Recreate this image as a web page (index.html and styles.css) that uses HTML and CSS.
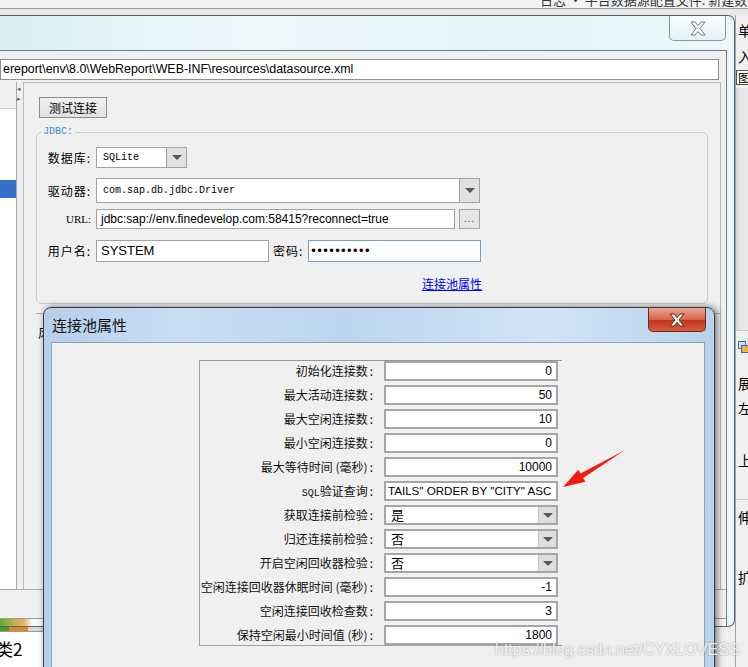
FILE: index.html
```html
<!DOCTYPE html>
<html lang="zh">
<head>
    <meta charset="UTF-8">
    <meta name="viewport" content="width=device-width, initial-scale=1.0">
    <title>连接池属性</title>
    <link rel="stylesheet" href="styles.css">
</head>
<body>
<div class="desk">
    <div class="caption">日志 · 平台数据源配置文件: 新建数据连接 1</div>
    <div class="toolstrip"></div>

    <!-- app behind, right edge -->
    <div class="side">
        <div class="s-ch s1">单</div>
        <div class="s-ch s2">入</div>
        <div class="s-box">图区</div>
        <div class="s-shade"></div>
        <div class="s-icon"><span class="sq1"></span><span class="sq2"></span></div>
        <div class="s-ch s4">展</div>
        <div class="s-ch s5">左</div>
        <div class="s-ch s6">上</div>
        <div class="s-line"></div>
        <div class="s-ch s7">伸</div>
        <div class="s-ch s8">扩</div>
    </div>

    <!-- app behind, bottom left -->
    <div class="bottom-app">
        <div class="strip"><span class="g"></span><span class="o"></span></div>
        <div class="tabs">类2</div>
    </div>

    <!-- data connection window -->
    <div class="win main">
        <div class="title">
            <div class="close">
                <svg width="18" height="15" viewBox="0 0 18 15"><polygon points="2,1 6,1 9,4.5 12,1 16,1 11,7.5 16,14 12,14 9,10.5 6,14 2,14 7,7.5" fill="#fbfbfb" stroke="#6f7a84" stroke-width="1"/></svg>
            </div>
        </div>
        <div class="body">
            <div class="path">ereport\env\8.0\WebReport\WEB-INF\resources\datasource.xml</div>
            <div class="split">
                <div class="tree">
                    <div class="tree-head"></div>
                    <div class="tree-list"><div class="sel"></div></div>
                </div>
                <div class="divider"><span>&#9666;</span><span>&#9656;</span></div>
                <div class="editor">
                    <div class="btn">测试连接</div>
                    <fieldset class="jdbc">
                        <legend>JDBC:</legend>
                        <div class="frow r1">
                            <label>数据库:</label>
                            <div class="combo w-db"><span>SQLite</span><i></i></div>
                        </div>
                        <div class="frow r2">
                            <label>驱动器:</label>
                            <div class="combo w-drv"><span>com.sap.db.jdbc.Driver</span><i></i></div>
                        </div>
                        <div class="frow r3">
                            <label class="url">URL:</label>
                            <div class="tf w-url">jdbc:sap://env.finedevelop.com:58415?reconnect=true</div>
                            <div class="dots">...</div>
                        </div>
                        <div class="frow r4">
                            <label>用户名:</label>
                            <div class="tf w-user">SYSTEM</div>
                            <span class="pw-label">密码:</span>
                            <div class="tf pw">&#8226;&#8226;&#8226;&#8226;&#8226;&#8226;&#8226;&#8226;&#8226;&#8226;</div>
                        </div>
                        <div class="pool"><a href="#">连接池属性</a></div>
                    </fieldset>
                    <div class="group2"><span>风</span></div>
                </div>
            </div>
            <div class="foot"><div class="bar"></div></div>
        </div>
    </div>

    <!-- pool properties dialog -->
    <div class="win dialog">
        <div class="dtitle">
            <span class="dname">连接池属性</span>
            <div class="dclose">
                <svg width="18" height="14" viewBox="0 0 18 14"><polygon points="2,1 6,1 9,4.5 12,1 16,1 11,7 16,13 12,13 9,9.5 6,13 2,13 7,7" fill="#ffffff" stroke="#5b1e16" stroke-width="1"/></svg>
            </div>
        </div>
        <div class="dbody">
            <div class="props">
                <div class="pl">初始化连接数<b>:</b></div><div class="pf">0</div>
                <div class="pl">最大活动连接数<b>:</b></div><div class="pf">50</div>
                <div class="pl">最大空闲连接数<b>:</b></div><div class="pf">10</div>
                <div class="pl">最小空闲连接数<b>:</b></div><div class="pf">0</div>
                <div class="pl">最大等待时间 (毫秒)<b>:</b></div><div class="pf">10000</div>
                <div class="pl"><span class="sql">SQL</span>验证查询<b>:</b></div><div class="pf left">TAILS" ORDER BY "CITY" ASC</div>
                <div class="pl">获取连接前检验<b>:</b></div><div class="pc"><span>是</span><i></i></div>
                <div class="pl">归还连接前检验<b>:</b></div><div class="pc"><span>否</span><i></i></div>
                <div class="pl">开启空闲回收器检验<b>:</b></div><div class="pc"><span>否</span><i></i></div>
                <div class="pl">空闲连接回收器休眠时间 (毫秒)<b>:</b></div><div class="pf">-1</div>
                <div class="pl">空闲连接回收检查数<b>:</b></div><div class="pf">3</div>
                <div class="pl">保持空闲最小时间值 (秒)<b>:</b></div><div class="pf">1800</div>
            </div>
        </div>
    </div>

    <svg class="arrow" width="80" height="55" viewBox="0 0 80 55">
        <polygon points="70,10 28.2,37.9 30.5,41.7 8,47 23.3,29.7 25.6,33.5" fill="#f21b14"/>
    </svg>

    <div class="watermark">https://blog.csdn.net/CYXLOVESS</div>
</div>
</body>
</html>
```

FILE: styles.css
```css
*{
    box-sizing: border-box;
}

body{
    margin: 0;
    background-color: #f0f0f0;
    font-family: "Noto Sans CJK SC", "Liberation Sans", sans-serif;
    font-size: 12px;
    color: #000;
}

.desk{
    position: relative;
    width: 748px;
    height: 667px;
    overflow: hidden;
    background-color: #f0f0f0;
}

.caption{
    height: 9px;
    overflow: hidden;
    border-bottom: 1px solid #9a9a9a;
    background-color: #f4f4f4;
    padding-left: 540px;
    font-size: 13px;
    line-height: 0;
    color: #333;
    white-space: nowrap;
}

.toolstrip{
    height: 8px;
    background-color: #e9e9e9;
}

/* right strip of the app behind */
.side{
    position: absolute;
    left: 735px;
    top: 15px;
    width: 13px;
    height: 652px;
    background-color: #f0f0f0;
    border-left: 1px solid #9ea6ae;
    font-size: 14px;
    line-height: 16px;
    white-space: nowrap;
}

.s-ch{
    padding-left: 2px;
}

.s1{ margin-top: 7px; }
.s2{ margin-top: 10px; }

.s-box{
    margin-top: 6px;
    height: 15px;
    line-height: 14px;
    font-size: 12px;
    background-color: #fff;
    border: 1px solid #555;
    border-right: none;
    padding-left: 1px;
}

.s-shade{
    height: 243px;
    margin-top: 3px;
    background: linear-gradient(to right, #cfd3d7, #e6e6e6 4px, #e9e9e9);
    border-bottom: 1px solid #c6c6c6;
}

.s-icon{
    position: relative;
    height: 14px;
    margin-top: 10px;
    margin-left: 2px;
}

.s-icon span{
    position: absolute;
    width: 8px;
    height: 8px;
    border: 1px solid #2c6fc4;
}

.sq1{ left: 0; top: 0; background-color: #cfe2f7; }
.sq2{ left: 3px; top: 4px; background-color: #f6b23c; }

.s4{ margin-top: 20px; }
.s5{ margin-top: 9px; }
.s6{ margin-top: 36px; }

.s-line{
    margin-top: 31px;
    border-top: 1px solid #cfc6b0;
}

.s7{ margin-top: 9px; }
.s8{ margin-top: 44px; }

/* bottom left of the app behind */
.bottom-app{
    position: absolute;
    left: 0;
    top: 627px;
    width: 60px;
    height: 40px;
}

.strip{
    display: flex;
    height: 4px;
    background-color: #d8d8d8;
    border-bottom: 1px solid #9a9a9a;
    box-sizing: content-box;
}

.strip .g{ width: 9px; background-color: #4d9a1e; }
.strip .o{ width: 19px; background-color: #de8a1f; }

.tabs{
    height: 35px;
    background-color: #fff;
    font-size: 17px;
    line-height: 34px;
    text-indent: -4px;
    overflow: hidden;
}

/* windows */
.win{
    position: absolute;
}

.main{
    left: -2px;
    top: 15px;
    width: 737px;
    height: 612px;
    border-top: 1px solid #59636e;
    border-right: 1px solid #59636e;
    border-bottom: 1px solid #59636e;
    border-radius: 0 7px 7px 0;
    background: linear-gradient(to right, #d9eff5, #eefafc 35%, #e2f4f8 70%, #eaf8fb);
}

.title{
    height: 34px;
    display: flex;
    justify-content: flex-end;
}

.close{
    width: 57px;
    height: 25px;
    margin-right: 8px;
    border: 1px solid #8795a2;
    border-top: none;
    border-radius: 0 0 5px 5px;
    background: linear-gradient(#f7fdff, #e3f2f6);
    display: flex;
    align-items: center;
    justify-content: center;
}

.body{
    margin-right: 7px;
    height: 576px;
    background-color: #f0f0f0;
    border-top: 1px solid #6f7c89;
    border-right: 1px solid #6f7c89;
    padding-top: 8px;
}

.path{
    margin-left: 2px;
    margin-right: 7px;
    height: 21px;
    background-color: #fff;
    border: 1px solid #8f8f8f;
    font-family: "Liberation Sans", Arial, sans-serif;
    font-size: 12.4px;
    line-height: 19px;
    padding-left: 2px;
    white-space: nowrap;
    overflow: hidden;
}

.split{
    display: flex;
    margin-top: 2px;
    margin-left: 2px;
    height: 508px;
    border-bottom: 1px solid #a9a9a9;
}

.tree{
    width: 17px;
    display: flex;
    flex-direction: column;
    border-right: 1px solid #a9a9a9;
}

.tree-head{
    height: 26px;
}

.tree-list{
    flex: 1;
    background-color: #fff;
    border-top: 1px solid #cfcfcf;
}

.sel{
    margin-top: 71px;
    height: 18px;
    background-color: #336fc6;
}

.divider{
    width: 6px;
    display: flex;
    flex-direction: column;
    font-size: 7px;
    line-height: 10px;
    color: #666;
    padding-top: 1px;
}

.editor{
    flex: 1;
    margin-right: 5px;
    border: 1px solid #b9b9b9;
    border-bottom: none;
}

.btn{
    width: 68px;
    height: 21px;
    margin: 14px 0 0 15px;
    border: 1px solid #8c8c8c;
    background: linear-gradient(#f2f2f2, #e1e1e1);
    text-align: center;
    line-height: 19px;
}

.jdbc{
    margin: 8px 12px 0 12px;
    padding: 9px 0 12px 0;
    border: 1px solid #cbcbcb;
    border-radius: 5px;
    min-width: 0;
}

.jdbc legend{
    margin-left: 4px;
    padding: 0 2px;
    font-family: "Liberation Mono", monospace;
    font-size: 10px;
    line-height: 12px;
    color: #3b8ed8;
}

.frow{
    display: flex;
    align-items: center;
}

.frow label{
    width: 54px;
    margin-right: 5px;
    text-align: right;
    white-space: nowrap;
    line-height: 14px;
    letter-spacing: 1px;
}

.frow .url{
    font-family: "Liberation Serif", serif;
    font-size: 11px;
    letter-spacing: 0;
}

.r2{ margin-top: 10px; }
.r3{ margin-top: 6px; }
.r4{ margin-top: 11px; }

.combo{
    display: flex;
    background-color: #fff;
    border: 1px solid #a2a2a2;
}

.combo span{
    flex: 1;
    padding-left: 6px;
    font-family: "Liberation Mono", monospace;
    font-size: 10px;
    line-height: 19px;
    white-space: nowrap;
}

.combo i, .pc i{
    width: 20px;
    background-color: #e1e1e1;
    border-left: 1px solid #a2a2a2;
    display: flex;
    align-items: center;
    justify-content: center;
}

.combo i::after, .pc i::after{
    content: "";
    border-left: 5px solid transparent;
    border-right: 5px solid transparent;
    border-top: 5px solid #575757;
}

.w-db{ width: 91px; height: 21px; }
.w-drv{ width: 384px; height: 25px; }
.w-drv span{ line-height: 23px; }

.tf{
    height: 20px;
    background-color: #fff;
    border: 1px solid #a2a2a2;
    font-family: "Liberation Sans", Arial, sans-serif;
    font-size: 12px;
    line-height: 18px;
    padding-left: 4px;
    white-space: nowrap;
    overflow: hidden;
}

.w-url{ width: 359px; }

.dots{
    width: 21px;
    height: 20px;
    margin-left: 4px;
    border: 1px solid #a2a2a2;
    background-color: #e6e6e6;
    font-size: 9px;
    line-height: 18px;
    text-align: center;
    letter-spacing: 1px;
    color: #555;
}

.w-user{ width: 173px; height: 22px; line-height: 20px; font-size: 13px; }

.pw-label{
    margin: 0 5px 0 4px;
    line-height: 14px;
    letter-spacing: 1px;
}

.pw{
    width: 173px;
    height: 22px;
    border-color: #7f9db9;
    font-size: 13px;
    line-height: 20px;
    letter-spacing: 1.4px;
    padding-left: 2px;
}

.pool{
    margin: 15px 0 0 59px;
    width: 386px;
    text-align: right;
    line-height: 14px;
}

.pool a{
    color: #0000f0;
}

.group2{
    margin: 9px 0 0 12px;
    border-top: 1px solid #b4b4b4;
    height: 40px;
    padding: 12px 0 0 2px;
    line-height: 14px;
}

.foot{
    height: 37px;
    margin-left: 2px;
    padding-top: 28px;
}

.bar{
    height: 8px;
    border-top: 1px solid #9c9c9c;
    background: linear-gradient(to right, #5fa834, #b9b257 14px, #ecb06a 24px, #f7f7f7 32px, #f7f7f7);
}

/* dialog */
.dialog{
    left: 43px;
    top: 307px;
    width: 672px;
    height: 380px;
    border: 1px solid #353d48;
    border-radius: 8px 8px 0 0;
    background: linear-gradient(to right, #b4cfeb, #c9def3 20%, #bcd5ee 45%, #d2e4f6 75%, #b8d2ec);
    box-shadow: 2px 0 7px rgba(0, 0, 0, 0.55);
}

.dtitle{
    height: 34px;
    display: flex;
}

.dname{
    padding-left: 8px;
    font-size: 15px;
    line-height: 34px;
    color: #111;
}

.dclose{
    width: 58px;
    height: 24px;
    margin-left: auto;
    margin-right: 8px;
    border: 1px solid #6e2b22;
    border-top: none;
    border-radius: 0 0 5px 5px;
    background: linear-gradient(#eaa593, #d9634b 50%, #c2341e 52%, #d85a40);
    display: flex;
    align-items: center;
    justify-content: center;
}

.dbody{
    margin: 0 9px 0 7px;
    height: 330px;
    background-color: #f0f0f0;
    border: 1px solid #8ea3b9;
    padding: 17px 0 0 147px;
}

.props{
    width: 363px;
    display: grid;
    grid-template-columns: 174px 174px;
    grid-auto-rows: 20px;
    column-gap: 10px;
    row-gap: 4px;
    border-top: 1px solid #969696;
    border-left: 1px solid #a0a0a0;
    border-bottom: 1px solid #a0a0a0;
}

.pl{
    text-align: right;
    white-space: nowrap;
    line-height: 20px;
    color: #111;
}

.pl b{
    font-weight: normal;
    padding: 0 1px 0 2px;
}

.sql{
    font-family: "Liberation Mono", monospace;
    font-size: 10px;
}

.pf{
    background-color: #fff;
    border: 2px solid #a6a6a6;
    font-family: "Liberation Sans", Arial, sans-serif;
    font-size: 12px;
    line-height: 16px;
    text-align: right;
    padding: 0 4px;
    white-space: nowrap;
    overflow: hidden;
}

.pf.left{
    text-align: left;
    padding-left: 2px;
    font-size: 11.6px;
}

.pc{
    display: flex;
    background-color: #fff;
    border: 2px solid #a6a6a6;
}

.pc span{
    flex: 1;
    padding-left: 5px;
    line-height: 16px;
    font-size: 13px;
}

.pc i{
    width: 18px;
    background-color: #dedede;
    border-left: 1px solid #c4c4c4;
}

.arrow{
    position: absolute;
    left: 555px;
    top: 440px;
}

.watermark{
    position: absolute;
    left: 495px;
    top: 641px;
    font-family: "Liberation Sans", Arial, sans-serif;
    font-size: 16px;
    color: rgba(255, 255, 255, 0.85);
    text-shadow: 0 0 2px rgba(90, 90, 90, 0.6);
    white-space: nowrap;
}
```
